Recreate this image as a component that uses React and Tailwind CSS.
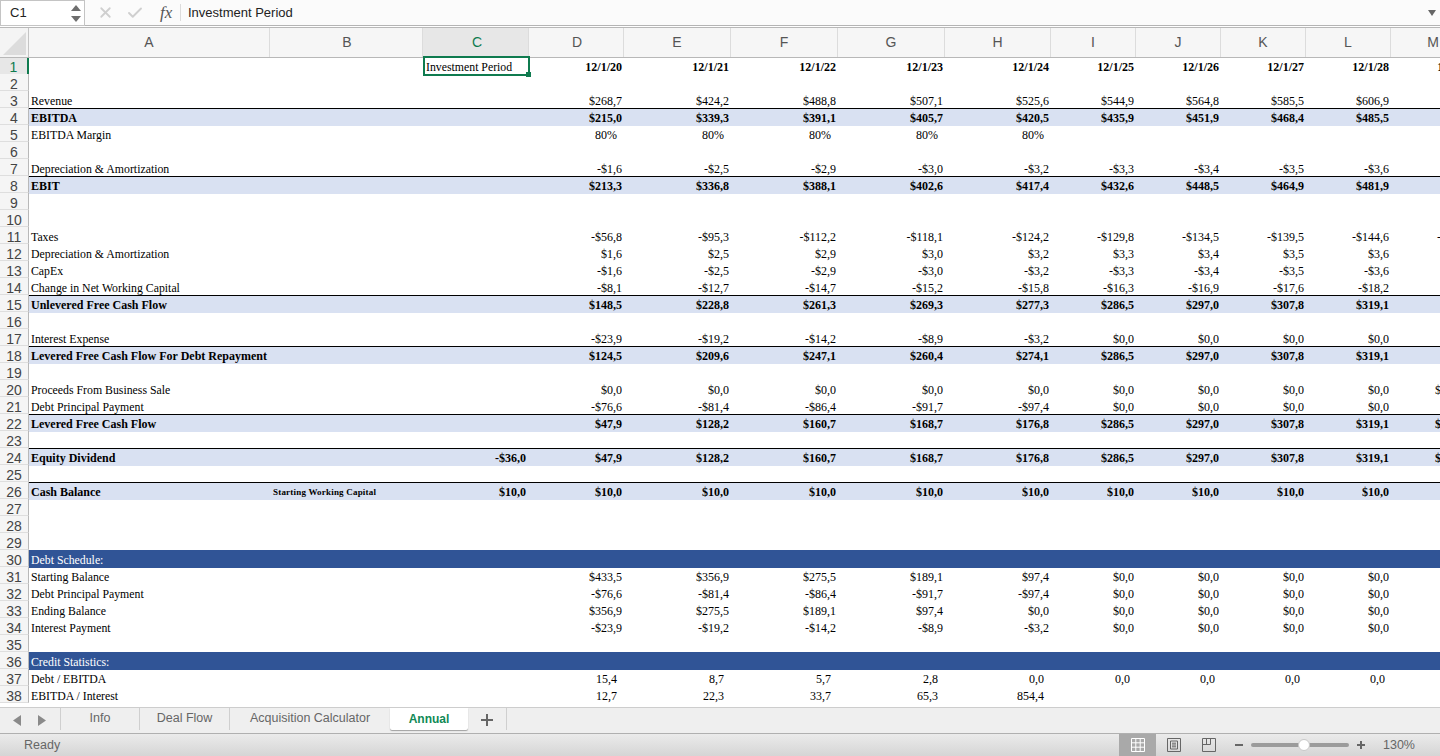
import React from "react";
import { X, Check } from "lucide-react";

const columns = ["A", "B", "C", "D", "E", "F", "G", "H", "I", "J", "K", "L", "M"];
const gridCols =
  "grid grid-cols-[29px_241px_153px_106px_95px_107px_107px_107px_106px_85px_85px_85px_85px_85px] w-[1476px]";

// v holds columns D to M, only what shows in the window is filled for M
const rows = [
  { n: 1, c: "Investment Period", v: ["12/1/20", "12/1/21", "12/1/22", "12/1/23", "12/1/24", "12/1/25", "12/1/26", "12/1/27", "12/1/28", "12/1/29"], boldValues: true },
  { n: 2 },
  { n: 3, a: "Revenue", v: ["$268,7", "$424,2", "$488,8", "$507,1", "$525,6", "$544,9", "$564,8", "$585,5", "$606,9"] },
  { n: 4, a: "EBITDA", band: true, v: ["$215,0", "$339,3", "$391,1", "$405,7", "$420,5", "$435,9", "$451,9", "$468,4", "$485,5"] },
  { n: 5, a: "EBITDA Margin", inset: true, v: ["80%", "80%", "80%", "80%", "80%"] },
  { n: 6 },
  { n: 7, a: "Depreciation & Amortization", v: ["-$1,6", "-$2,5", "-$2,9", "-$3,0", "-$3,2", "-$3,3", "-$3,4", "-$3,5", "-$3,6"] },
  { n: 8, a: "EBIT", band: true, v: ["$213,3", "$336,8", "$388,1", "$402,6", "$417,4", "$432,6", "$448,5", "$464,9", "$481,9"] },
  { n: 9 },
  { n: 10 },
  { n: 11, a: "Taxes", v: ["-$56,8", "-$95,3", "-$112,2", "-$118,1", "-$124,2", "-$129,8", "-$134,5", "-$139,5", "-$144,6", "-$149,9"] },
  { n: 12, a: "Depreciation & Amortization", v: ["$1,6", "$2,5", "$2,9", "$3,0", "$3,2", "$3,3", "$3,4", "$3,5", "$3,6"] },
  { n: 13, a: "CapEx", v: ["-$1,6", "-$2,5", "-$2,9", "-$3,0", "-$3,2", "-$3,3", "-$3,4", "-$3,5", "-$3,6"] },
  { n: 14, a: "Change in Net Working Capital", v: ["-$8,1", "-$12,7", "-$14,7", "-$15,2", "-$15,8", "-$16,3", "-$16,9", "-$17,6", "-$18,2"] },
  { n: 15, a: "Unlevered Free Cash Flow", band: true, v: ["$148,5", "$228,8", "$261,3", "$269,3", "$277,3", "$286,5", "$297,0", "$307,8", "$319,1"] },
  { n: 16 },
  { n: 17, a: "Interest Expense", v: ["-$23,9", "-$19,2", "-$14,2", "-$8,9", "-$3,2", "$0,0", "$0,0", "$0,0", "$0,0"] },
  { n: 18, a: "Levered Free Cash Flow For Debt Repayment", band: true, v: ["$124,5", "$209,6", "$247,1", "$260,4", "$274,1", "$286,5", "$297,0", "$307,8", "$319,1"] },
  { n: 19 },
  { n: 20, a: "Proceeds From Business Sale", v: ["$0,0", "$0,0", "$0,0", "$0,0", "$0,0", "$0,0", "$0,0", "$0,0", "$0,0", "$1987,5"] },
  { n: 21, a: "Debt Principal Payment", v: ["-$76,6", "-$81,4", "-$86,4", "-$91,7", "-$97,4", "$0,0", "$0,0", "$0,0", "$0,0"] },
  { n: 22, a: "Levered Free Cash Flow", band: true, v: ["$47,9", "$128,2", "$160,7", "$168,7", "$176,8", "$286,5", "$297,0", "$307,8", "$319,1", "$1987,5"] },
  { n: 23 },
  { n: 24, a: "Equity Dividend", band: true, c: "-$36,0", v: ["$47,9", "$128,2", "$160,7", "$168,7", "$176,8", "$286,5", "$297,0", "$307,8", "$319,1", "$1987,5"] },
  { n: 25 },
  { n: 26, a: "Cash Balance", b: "Starting Working Capital", band: true, c: "$10,0", v: ["$10,0", "$10,0", "$10,0", "$10,0", "$10,0", "$10,0", "$10,0", "$10,0", "$10,0"] },
  { n: 27 },
  { n: 28 },
  { n: 29 },
  { n: 30, a: "Debt Schedule:", navy: true },
  { n: 31, a: "Starting Balance", v: ["$433,5", "$356,9", "$275,5", "$189,1", "$97,4", "$0,0", "$0,0", "$0,0", "$0,0"] },
  { n: 32, a: "Debt Principal Payment", v: ["-$76,6", "-$81,4", "-$86,4", "-$91,7", "-$97,4", "$0,0", "$0,0", "$0,0", "$0,0"] },
  { n: 33, a: "Ending Balance", v: ["$356,9", "$275,5", "$189,1", "$97,4", "$0,0", "$0,0", "$0,0", "$0,0", "$0,0"] },
  { n: 34, a: "Interest Payment", v: ["-$23,9", "-$19,2", "-$14,2", "-$8,9", "-$3,2", "$0,0", "$0,0", "$0,0", "$0,0"] },
  { n: 35 },
  { n: 36, a: "Credit Statistics:", navy: true },
  { n: 37, a: "Debt / EBITDA", inset: true, v: ["15,4", "8,7", "5,7", "2,8", "0,0", "0,0", "0,0", "0,0", "0,0"] },
  { n: 38, a: "EBITDA / Interest", inset: true, v: ["12,7", "22,3", "33,7", "65,3", "854,4"] },
];

const FormulaBar = () => (
  <div className="flex h-[26px] items-center bg-[#fbfbfb] border-b border-[#b4b4b4]">
    <div className="flex h-[26px] w-[85px] items-center justify-between bg-white border border-[#c4c4c4] pl-[9px] pr-[2px] pt-px text-[13px] text-[#222]">
      C1
      <svg width="12" height="22" viewBox="0 0 12 22" className="fill-[#6e6e6e]">
        <polygon points="6,3 11,9 1,9" />
        <polygon points="6,20 11,14 1,14" />
      </svg>
    </div>
    <X size={17} strokeWidth={2.5} className="ml-[12px] text-[#cfcfcf]" />
    <Check size={18} strokeWidth={2.5} className="ml-[12px] text-[#cfcfcf]" />
    <span className="ml-[16px] w-[20px] font-['Liberation_Serif'] text-[17px] italic text-[#555]">fx</span>
    <div className="h-[17px] w-px bg-[#dcdcdc]" />
    <span className="ml-[7px] pt-px text-[13px] text-[#222]">Investment Period</span>
    <svg width="10" height="8" viewBox="0 0 10 8" className="ml-auto mr-[3px] fill-[#666]">
      <polygon points="1,1 9,1 5,7" />
    </svg>
  </div>
);

const ColumnHeader = () => (
  <div className={`${gridCols} relative z-10 -mb-px h-[30px] bg-[#f6f6f6] border-b border-[#b8b8b8] text-[14px] text-[#555]`}>
    <div className="flex items-end justify-end bg-[#f4f4f4] border-r border-[#c4c4c4] pr-[2px] pb-[2px]">
      <svg width="23" height="23" viewBox="0 0 23 23" className="fill-[#dcdcdc]">
        <polygon points="23,0 23,23 0,23" />
      </svg>
    </div>
    {columns.map((col) => (
      <div
        key={col}
        className={
          col === "C"
            ? "flex items-center justify-center bg-[#e7e7e7] pl-[3px] text-[#0f7b4f] border-r border-[#dcdcdc]"
            : col === "B" || col === "D"
              ? "flex items-center justify-center pl-[2px] border-r border-[#dcdcdc]"
              : "flex items-center justify-center border-r border-[#dcdcdc]"
        }
      >
        {col}
      </div>
    ))}
  </div>
);

const SheetRow = ({ row }) => {
  // filled rows run one pixel past the row below, as in the sheet
  const fill = row.navy
    ? "h-[18px] bg-[#305496] pt-[2px] text-white"
    : row.band
      ? "h-[18px] bg-[#d9e1f2] border-t border-black pt-px text-black"
      : "pt-[2px] text-black";
  const bold = row.band ? "font-bold" : "";
  const values = row.v || [];
  return (
    <div className={`${gridCols} h-[17px] font-['Liberation_Serif'] text-[12px] leading-[17px]`}>
      <div
        className={
          row.n === 1
            ? "h-[18px] bg-[#e7e7e7] border-r-2 border-[#0f7b4f] border-b border-b-[#dedede] pt-[2px] text-center font-['Liberation_Sans'] text-[14px] leading-[17px] text-[#0f7b4f]"
            : "h-[17px] bg-[#f5f5f5] border-r border-[#b8b8b8] border-b border-b-[#dedede] pt-[2px] text-center font-['Liberation_Sans'] text-[14px] leading-[17px] text-[#444]"
        }
      >
        {row.n}
      </div>
      <div className={`${fill} ${bold} pl-[2px] whitespace-nowrap ${row.band ? "" : "text-[11.8px]"}`}>{row.a}</div>
      <div className={`${fill} pl-[3px] whitespace-nowrap text-[9px] font-bold tracking-[0.2px]`}>{row.b}</div>
      {row.n === 1 ? (
        <div className="relative pl-[3px] pt-[2px] whitespace-nowrap text-[11.8px] text-black">
          {row.c}
          <div className="absolute z-20 left-0 -top-px h-[20px] w-[107px] border-2 border-[#0f7b4f]" />
          <div className="absolute z-20 -right-[2px] top-[15px] h-[5px] w-[5px] bg-[#0f7b4f]" />
        </div>
      ) : (
        <div className={`${fill} ${bold} pr-[3px] text-right whitespace-nowrap`}>{row.c}</div>
      )}
      {columns.slice(3).map((col, i) => (
        <div
          key={col}
          className={`${fill} ${bold} ${row.boldValues ? "font-bold" : ""} ${
            row.inset ? (i < 5 ? "pr-[7px]" : "pr-[6px]") : "pr-[2px]"
          } text-right whitespace-nowrap`}
        >
          {values[i]}
        </div>
      ))}
    </div>
  );
};

const Sep = () => <div className="h-[22px] w-px bg-[#cfcfcf]" />;

const TabBar = () => (
  <div className="flex h-[27px] items-start bg-[#efefef] border-t border-[#cdcdcd] border-b border-b-[#b0b0b0] text-[12.5px] text-[#666]">
    <div className="flex h-[24px] w-[60px] items-center gap-[15px] pl-[13px]">
      <svg width="9" height="11" viewBox="0 0 9 11" className="fill-[#8a8a8a]">
        <polygon points="8,0 8,11 0,5.5" />
      </svg>
      <svg width="9" height="11" viewBox="0 0 9 11" className="fill-[#8a8a8a]">
        <polygon points="1,0 1,11 9,5.5" />
      </svg>
    </div>
    <Sep />
    <div className="flex h-[20px] w-[78px] items-center justify-center pt-px">Info</div>
    <Sep />
    <div className="flex h-[20px] w-[89px] items-center justify-center pt-px">Deal Flow</div>
    <Sep />
    <div className="flex h-[20px] w-[160px] items-center justify-center pt-px">Acquisition Calculator</div>
    <div className="flex h-[22px] w-[78px] items-center justify-center rounded-b-[2px] bg-white pb-px text-[12px] font-bold text-[#0f8a56] shadow-[0_1px_1px_#a0a0a0]">
      Annual
    </div>
    <div className="flex h-[24px] w-[38px] items-center justify-center">
      <svg width="12" height="12" viewBox="0 0 12 12" className="fill-[#666]">
        <rect x="0" y="5" width="12" height="2" />
        <rect x="5" y="0" width="2" height="12" />
      </svg>
    </div>
    <Sep />
  </div>
);

const StatusBar = () => (
  <div className="flex h-[22px] flex-1 items-center bg-gradient-to-b from-[#ebebeb] to-[#d5d5d5] text-[#666]">
    <span className="ml-[24px] text-[12.5px]">Ready</span>
    <div className="ml-auto flex h-full items-center">
      <div className="flex h-full w-[37px] items-center justify-center bg-[#a9a9a9]">
        <svg width="14" height="14" viewBox="0 0 14 14" className="fill-none stroke-white">
          <path d="M0.5 0.5h13v13h-13zM0.5 4.8h13M0.5 9.2h13M4.8 0.5v13M9.2 0.5v13" />
        </svg>
      </div>
      <div className="flex h-full w-[35px] items-center justify-center">
        <svg width="14" height="14" viewBox="0 0 14 14" className="fill-none stroke-[#666]">
          <path d="M0.5 0.5h13v13h-13zM3.5 3h7v8h-7zM5 5.2h4M5 7h4M5 8.8h4" />
        </svg>
      </div>
      <div className="flex h-full w-[36px] items-center justify-center">
        <svg width="14" height="14" viewBox="0 0 14 14" className="fill-none stroke-[#666]">
          <path d="M0.5 0.5h13v13h-13zM0.5 6.5h8v-6M4.5 0.5v6" />
        </svg>
      </div>
      <div className="ml-[8px] h-[2px] w-[8px] bg-[#666]" />
      <div className="relative ml-[8px] h-[4px] w-[98px] rounded-full bg-[#9b9b9b]">
        <div className="absolute left-[47px] top-[-4px] h-[12px] w-[12px] rounded-full border border-[#c8c8c8] bg-white" />
      </div>
      <svg width="8" height="8" viewBox="0 0 8 8" className="ml-[8px] fill-[#666]">
        <rect x="0" y="3" width="8" height="2" />
        <rect x="3" y="0" width="2" height="8" />
      </svg>
      <span className="ml-[18px] mr-[25px] text-[12.5px]">130%</span>
    </div>
  </div>
);

export default function App() {
  return (
    <div className="flex h-screen flex-col overflow-hidden bg-white font-['Liberation_Sans',sans-serif]">
      <FormulaBar />
      <div className="h-[2px] border-b border-[#b8b8b8] bg-white" />
      <div className="h-[679px] overflow-hidden bg-white">
        <ColumnHeader />
        {rows.map((row) => (
          <SheetRow key={row.n} row={row} />
        ))}
      </div>
      <TabBar />
      <StatusBar />
    </div>
  );
}
